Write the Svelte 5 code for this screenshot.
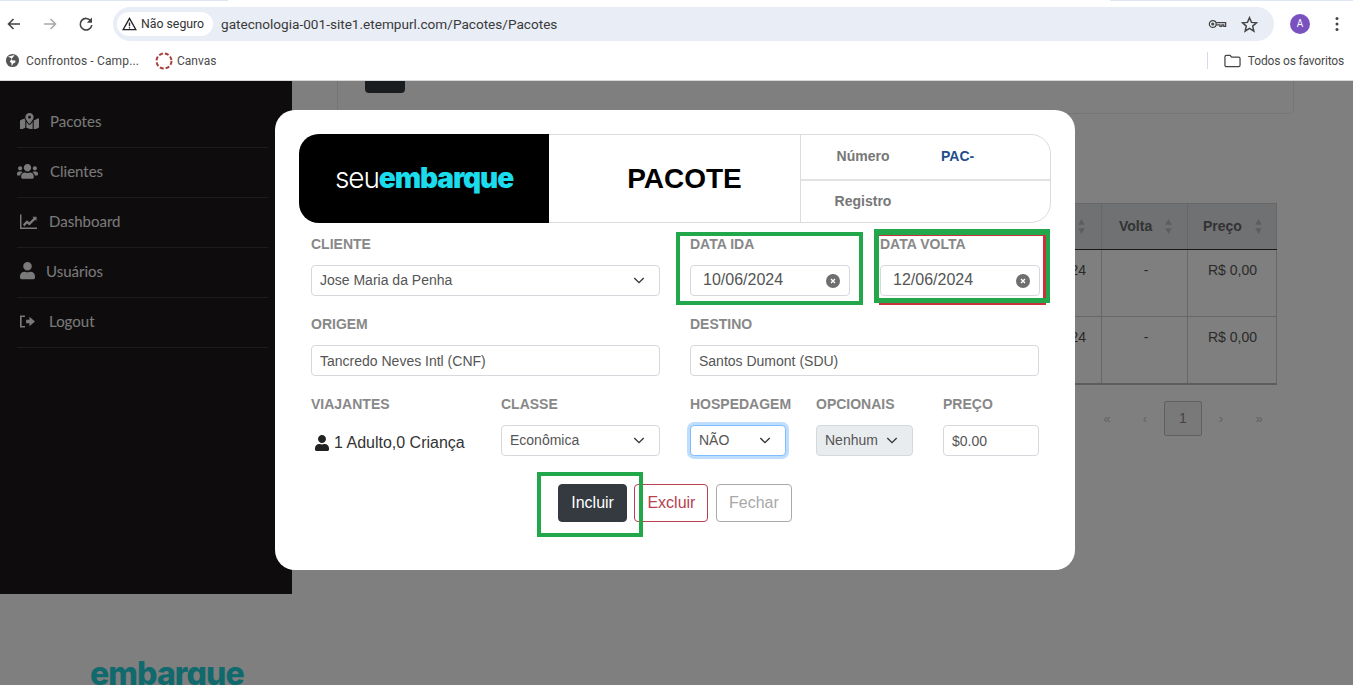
<script>
  const menu = [
    { name: "Pacotes", box: "0 0 576 512", w: 19, left: 20, gap: 11, d: "M288 0c-69.59 0-126 56.41-126 126 0 56.26 82.35 158.8 113.9 196.02 6.39 7.54 17.82 7.54 24.2 0C331.65 284.8 414 182.26 414 126 414 56.41 357.59 0 288 0zm0 168c-23.2 0-42-18.8-42-42s18.8-42 42-42 42 18.8 42 42-18.8 42-42 42zM20.12 215.95A32.006 32.006 0 0 0 0 245.66v250.32c0 11.32 11.43 19.06 21.94 14.86L160 448V214.92c-8.84-15.98-16.07-31.54-21.25-46.42L20.12 215.95zM288 359.67c-14.07 0-27.38-6.18-36.53-16.96-19.7-23.24-40.65-49.71-59.47-76.72v182l192 64V266c-18.82 27-39.76 53.48-59.47 76.72-9.15 10.77-22.46 16.95-36.53 16.95zm266.06-198.51L416 224v288l139.88-55.95A31.996 31.996 0 0 0 576 426.34V176.02c0-11.32-11.43-19.06-21.94-14.86z" },
    { name: "Clientes", box: "0 0 640 512", w: 21, left: 17, gap: 12, d: "M96 224c35.3 0 64-28.7 64-64s-28.7-64-64-64-64 28.7-64 64 28.7 64 64 64zm448 0c35.3 0 64-28.7 64-64s-28.7-64-64-64-64 28.7-64 64 28.7 64 64 64zm32 32h-64c-17.6 0-33.5 7.1-45.1 18.6 40.3 22.1 68.9 62 75.1 109.4h66c17.7 0 32-14.3 32-32v-32c0-35.3-28.7-64-64-64zm-256 0c61.9 0 112-50.1 112-112S381.9 32 320 32 208 82.1 208 144s50.1 112 112 112zm76.8 32h-8.3c-20.8 10-43.9 16-68.5 16s-47.6-6-68.5-16h-8.3C179.6 288 128 339.6 128 403.2V432c0 26.5 21.5 48 48 48h288c26.5 0 48-21.5 48-48v-28.8c0-63.6-51.6-115.2-115.2-115.2zm-223.7-13.4C161.5 263.1 145.6 256 128 256H64c-35.3 0-64 28.7-64 64v32c0 17.7 14.3 32 32 32h65.9c6.3-47.4 34.9-87.3 75.2-109.4z" },
    { name: "Dashboard", box: "0 0 512 512", w: 17, left: 20, gap: 12, d: "M0 48h44v388h468v44H0zM92 340l118-122 70 60 130-128-36-36h124v124l-38-38-178 174-70-60-88 90z" },
    { name: "Usuários", box: "0 0 448 512", w: 15, left: 20, gap: 11, d: "M224 256c70.7 0 128-57.3 128-128S294.7 0 224 0 96 57.3 96 128s57.3 128 128 128zm89.6 32h-16.7c-22.2 10.2-46.9 16-72.9 16s-50.6-5.8-72.9-16h-16.7C60.2 288 0 348.2 0 422.4V464c0 26.5 21.5 48 48 48h352c26.5 0 48-21.5 48-48v-41.6c0-74.2-60.2-134.4-134.4-134.4z" },
    { name: "Logout", box: "0 0 512 512", w: 15, left: 20, gap: 14, d: "M0 48h170v56H56v304h114v56H0zM210 196h112V90l190 166-190 166V316H210z" },
  ];
  const pages = ["«", "‹", "1", "›", "»"];
</script>

{#snippet chevron()}
  <svg class="chev" viewBox="0 0 14 8"><path d="M1.5 1.2 7 6.5l5.5-5.3" /></svg>
{/snippet}

{#snippet clear()}
  <svg class="clear" viewBox="0 0 14 14"><circle cx="7" cy="7" r="7" /><path d="M5 5l4 4M9 5l-4 4" /></svg>
{/snippet}

{#snippet sort()}
  <svg class="sort" viewBox="0 0 10 18"><path d="M5 0l4 7H1zM5 18l-4-7h8z" /></svg>
{/snippet}

<div class="screen">
  <header class="chrome">
    <div class="strip"></div>
    <div class="toolbar">
      <svg class="nav" viewBox="0 0 16 16"><path d="M14 8H3M7.5 3 2.5 8l5 5" /></svg>
      <svg class="nav off" viewBox="0 0 16 16"><path d="M2 8h11M8.5 3l5 5-5 5" /></svg>
      <svg class="nav" viewBox="0 0 16 16"><path d="M13 5.2A5.8 5.8 0 1 0 13.8 9" /><path class="solid" d="M14 1.5v5.2H8.8z" /></svg>
      <div class="omnibox">
        <div class="chip">
          <svg viewBox="0 0 16 15"><path d="M8 1.5 1.2 13.5h13.6zM8 6v4M8 11v1.2" /></svg>
          <span>Não seguro</span>
        </div>
        <span class="url">gatecnologia-001-site1.etempurl.com/Pacotes/Pacotes</span>
        <svg class="key" viewBox="0 0 20 12"><circle cx="5" cy="6" r="3.6" /><circle cx="5" cy="6" r="1" /><path d="M8.6 4.6h10v4h-2V7h-2v1.600h-2V7H8.600" /></svg>
        <svg class="star" viewBox="0 0 16 16"><path d="M8 1.600l1.900 4.400 4.700.4-3.600 3.100 1.100 4.700L8 11.700l-4.100 2.500 1.100-4.700-3.600-3.100 4.700-.4z" /></svg>
      </div>
      <div class="avatar">A</div>
      <svg class="dots" viewBox="0 0 4 16"><circle cx="2" cy="2.500" r="1.500" /><circle cx="2" cy="8" r="1.500" /><circle cx="2" cy="13.500" r="1.500" /></svg>
    </div>
    <div class="bookmarks">
      <svg class="globe" viewBox="0 0 16 16"><circle cx="8" cy="8" r="7" /><path d="M3 4l3 1 1 2-2 2 2 2v3l2-3 2-1v-2H8L7 6l2-2 1-2z" /></svg>
      <span class="mark-name first">Confrontos - Camp...</span>
      <svg class="canvas-ico" viewBox="0 0 18 18"><circle cx="9" cy="9" r="7.500" /></svg>
      <span class="mark-name">Canvas</span>
      <span class="sep"></span>
      <svg class="folder" viewBox="0 0 18 14"><path d="M1 2.500A1.500 1.500 0 0 1 2.500 1h4l1.500 2h7.500A1.500 1.500 0 0 1 17 4.500v7a1.500 1.500 0 0 1-1.500 1.500h-13A1.500 1.500 0 0 1 1 11.500z" /></svg>
      <span class="mark-name all">Todos os favoritos</span>
    </div>
  </header>

  <div class="page">
    <div class="left">
      <nav class="sidebar">
        {#each menu as item}
          <a class="item" href="#top">
            <svg viewBox={item.box} style:width="{item.w}px" style:margin-left="{item.left - 17}px" style:margin-right="{item.gap}px"><path d={item.d} /></svg>
            {item.name}
          </a>
        {/each}
      </nav>
      <div class="foot-logo">embarque</div>
    </div>

    <main class="content">
      <div class="filter-card"><span class="filter-btn"></span></div>
      <table>
        <thead>
          <tr>
            <th class="wide">Pacote</th>
            <th class="ida">Ida {@render sort()}</th>
            <th class="volta">Volta {@render sort()}</th>
            <th class="preco">Preço {@render sort()}</th>
          </tr>
        </thead>
        <tbody>
          <tr><td></td><td class="date">10/06/2024</td><td class="center">-</td><td class="price">R$ 0,00</td></tr>
          <tr><td></td><td class="date">10/06/2024</td><td class="center">-</td><td class="price">R$ 0,00</td></tr>
        </tbody>
      </table>
      <div class="pager">
        {#each pages as p}
          <span class:current={p === "1"}>{p}</span>
        {/each}
      </div>
    </main>

    <div class="backdrop">
      <section class="modal">
        <div class="head">
          <div class="brand"><span class="seu">seu</span><span class="emb">embarque</span></div>
          <div class="title">PACOTE</div>
          <div class="meta">
            <div class="meta-row"><b>Número</b><b class="code">PAC-</b></div>
            <div class="meta-row"><b>Registro</b></div>
          </div>
        </div>

        <div class="form">
          <div class="halves">
            <div>
              <div class="lbl">CLIENTE</div>
              <div class="ctl sel">Jose Maria da Penha {@render chevron()}</div>
            </div>
            <div class="dates">
              <div>
                <div class="lbl">DATA IDA</div>
                <div class="ctl date-ctl">10/06/2024 {@render clear()}</div>
              </div>
              <div>
                <div class="lbl">DATA VOLTA</div>
                <div class="ctl date-ctl">12/06/2024 {@render clear()}</div>
              </div>
            </div>
          </div>

          <div class="halves">
            <div>
              <div class="lbl">ORIGEM</div>
              <div class="ctl">Tancredo Neves Intl (CNF)</div>
            </div>
            <div>
              <div class="lbl">DESTINO</div>
              <div class="ctl">Santos Dumont (SDU)</div>
            </div>
          </div>

          <div class="halves">
            <div class="two">
              <div>
                <div class="lbl">VIAJANTES</div>
                <div class="travellers">
                  <svg viewBox="0 0 448 512"><path d="M224 256c70.7 0 128-57.300 128-128S294.700 0 224 0 96 57.300 96 128s57.300 128 128 128zm89.600 32h-16.700c-22.200 10.200-46.900 16-72.900 16s-50.600-5.800-72.900-16h-16.700C60.200 288 0 348.200 0 422.400V464c0 26.500 21.500 48 48 48h352c26.500 0 48-21.500 48-48v-41.600c0-74.200-60.200-134.400-134.400-134.400z" /></svg>
                  1 Adulto,0 Criança
                </div>
              </div>
              <div>
                <div class="lbl">CLASSE</div>
                <div class="ctl sel">Econômica {@render chevron()}</div>
              </div>
            </div>
            <div class="three">
              <div>
                <div class="lbl">HOSPEDAGEM</div>
                <div class="ctl sel focused">NÃO {@render chevron()}</div>
              </div>
              <div>
                <div class="lbl">OPCIONAIS</div>
                <div class="ctl sel disabled">Nenhum {@render chevron()}</div>
              </div>
              <div>
                <div class="lbl">PREÇO</div>
                <div class="ctl">$0.00</div>
              </div>
            </div>
          </div>
        </div>

        <div class="actions">
          <button class="btn dark">Incluir</button>
          <button class="btn danger">Excluir</button>
          <button class="btn muted">Fechar</button>
        </div>

        <!-- marcas desenhadas por cima do print -->
        <span class="redbox"></span>
        <span class="mark m-ida"></span>
        <span class="mark m-volta"></span>
        <span class="mark m-incluir"></span>
      </section>
    </div>
  </div>
</div>

<style>
  :global(body) {
    margin: 0;
    overflow: hidden;
  }

  .screen {
    height: 685px;
    display: flex;
    flex-direction: column;
    overflow: hidden;
    background: #fff;
    font-family: "Liberation Sans", Arial, sans-serif;
  }

  /* browser chrome */
  .chrome {
    flex: none;
    height: 81px;
    background: #fff;
    border-bottom: 1px solid #d8d8d8;
    box-sizing: border-box;
    font-family: Roboto, "Open Sans", sans-serif;
  }

  .strip {
    height: 1px;
    background: linear-gradient(to right, #dde6f2 228px, #fff 228px, #fff 1110px, #dde6f2 1110px);
  }

  .toolbar {
    height: 46px;
    display: flex;
    align-items: center;
    padding-left: 6px;
  }

  .nav {
    width: 16px;
    height: 16px;
    margin-right: 20px;
    fill: none;
    stroke: #444;
    stroke-width: 1.600;
  }

  .nav.off {
    stroke: #a8a8a8;
  }

  .nav .solid {
    fill: #444;
    stroke: none;
  }

  .omnibox {
    width: 1161px;
    height: 34px;
    margin-left: -1px;
    border-radius: 17px;
    background: #e9edf6;
    display: flex;
    align-items: center;
    padding: 0 16px 0 4px;
    box-sizing: border-box;
  }

  .chip {
    width: 96px;
    height: 24px;
    background: #fff;
    border-radius: 12px;
    display: flex;
    align-items: center;
    font-size: 12.300px;
    color: #333;
    white-space: nowrap;
  }

  .chip svg {
    width: 15px;
    height: 14px;
    margin: 0 4px 0 5px;
    fill: none;
    stroke: #222;
    stroke-width: 1.400;
  }

  .url {
    margin-left: 8px;
    font-size: 13.600px;
    color: #3a3a3a;
    flex: 1;
  }

  .key {
    width: 19px;
    height: 12px;
    fill: none;
    stroke: #444;
    stroke-width: 1.300;
    margin-right: 14px;
  }

  .star {
    width: 17px;
    height: 17px;
    fill: none;
    stroke: #444;
    stroke-width: 1.400;
  }

  .avatar {
    width: 20px;
    height: 20px;
    margin-left: 16px;
    border-radius: 50%;
    background: #7a52c0;
    color: #fff;
    font-size: 10px;
    line-height: 20px;
    text-align: center;
  }

  .dots {
    width: 4px;
    height: 16px;
    margin-left: 25px;
    fill: #444;
  }

  .bookmarks {
    height: 27px;
    display: flex;
    align-items: center;
    padding-left: 5px;
    font-size: 12px;
    color: #4a4a4a;
  }

  .globe {
    width: 15px;
    height: 15px;
    fill: #555;
  }

  .globe path {
    fill: #fff;
  }

  .mark-name {
    white-space: nowrap;
  }

  .mark-name.first {
    margin-left: 6px;
    width: 121px;
    letter-spacing: 0.15px;
  }

  .canvas-ico {
    width: 18px;
    height: 18px;
    margin-left: 8px;
    margin-right: 4px;
    fill: none;
    stroke: #a8403a;
    stroke-width: 2;
    stroke-dasharray: 4 2;
  }

  .sep {
    width: 1px;
    height: 17px;
    margin-left: auto;
    background: #d3dce9;
  }

  .folder {
    width: 17px;
    height: 14px;
    margin-left: 16px;
    fill: none;
    stroke: #444;
    stroke-width: 1.300;
  }

  .mark-name.all {
    margin: 0 9px 0 7px;
    letter-spacing: -0.17px;
  }

  /* page behind the modal */
  .page {
    position: relative;
    flex: 1;
    display: flex;
    overflow: hidden;
    background: #fff;
  }

  .left {
    flex: none;
    width: 292px;
  }

  .sidebar {
    height: 513px;
    box-sizing: border-box;
    background: #1c191a;
    padding: 17px 24px 0 17px;
    font-family: Lato, sans-serif;
  }

  .item {
    height: 50px;
    display: flex;
    align-items: center;
    box-sizing: border-box;
    border-bottom: 1px solid #3c3a3b;
    color: #f4f4f4;
    font-size: 15px;
    text-decoration: none;
    padding-bottom: 3px;
  }

  .item svg {
    flex: none;
    fill: #f4f4f4;
  }

  .foot-logo {
    margin: 60px 0 0 90px;
    font-family: Inter, sans-serif;
    font-weight: 800;
    font-size: 32px;
    line-height: 40px;
    letter-spacing: -0.9px;
    color: #1ed3da;
  }

  .content {
    flex: 1;
    padding: 0 59px 0 45px;
    font-size: 14px;
    color: #555;
  }

  .filter-card {
    height: 33px;
    box-sizing: border-box;
    border: 1px solid #eaeaea;
    border-top: 0;
    border-radius: 0 0 5px 5px;
    padding-left: 27px;
  }

  .filter-btn {
    display: block;
    width: 40px;
    height: 12px;
    background: #343a40;
    border-radius: 0 0 4px 4px;
  }

  table {
    margin: 89px 17px 0;
    width: 923px;
    border-collapse: collapse;
    table-layout: fixed;
    border: 1px solid #ccc;
    border-bottom: 2px solid #bbb;
  }

  th,
  td {
    border: 1px solid #cfcfcf;
    padding: 0 15px;
    box-sizing: border-box;
  }

  thead tr {
    height: 46px;
    background: #dfe3e7;
  }

  th {
    border-bottom: 1px solid #333;
    padding-bottom: 2px;
    font-weight: bold;
    color: #666;
    text-align: left;
    white-space: nowrap;
  }

  tbody tr {
    height: 67px;
  }

  td {
    vertical-align: top;
    padding-top: 12px;
  }

  .ida {
    width: 121px;
    text-align: right;
  }

  .volta {
    width: 86px;
    padding-left: 17px;
  }

  .preco {
    width: 89px;
  }

  .date {
    text-align: right;
  }

  .center {
    text-align: center;
    padding-left: 18px;
  }

  .price {
    text-align: right;
    padding-right: 19px;
  }

  .sort {
    width: 9px;
    height: 15px;
    margin-left: 8px;
    vertical-align: -3px;
    fill: #bbb;
  }

  .pager {
    margin: 16px 0 0 751px;
    display: flex;
    align-items: center;
    width: 200px;
    color: #c4c4c4;
    font-size: 13px;
  }

  .pager span {
    width: 38px;
    text-align: center;
    line-height: 35px;
  }

  .pager .current {
    box-sizing: border-box;
    height: 35px;
    line-height: 33px;
    border: 1px solid #c0c0c0;
    border-radius: 2px;
    background: #f2f2f2;
    color: #888;
    font-size: 14px;
  }

  /* modal */
  .backdrop {
    position: absolute;
    inset: 0;
    background: rgba(0, 0, 0, 0.5);
    padding: 29px 0 0 275px;
  }

  .modal {
    position: relative;
    width: 800px;
    height: 460px;
    box-sizing: border-box;
    padding: 24px;
    background: #fff;
    border-radius: 20px;
  }

  .head {
    height: 89px;
    display: grid;
    grid-template-columns: 249px 252px 1fr;
    box-sizing: border-box;
    border: 1px solid #dcdcdc;
    border-radius: 20px;
  }

  .brand {
    margin: -1px 0 -1px -1px;
    background: #000;
    border-radius: 20px 0 0 20px;
    display: flex;
    align-items: center;
    justify-content: center;
    font-family: Inter, sans-serif;
    font-size: 28px;
    letter-spacing: -1.100px;
    padding-bottom: 2px;
  }

  .seu {
    color: #fff;
    font-weight: 300;
  }

  .emb {
    color: #1bdcec;
    font-weight: 900;
  }

  .title {
    display: flex;
    align-items: center;
    justify-content: center;
    padding-left: 20px;
    font-weight: bold;
    font-size: 28px;
    color: #000;
    border-right: 1px solid #dcdcdc;
  }

  .meta {
    display: grid;
    grid-template-rows: 44px 1fr;
    font-size: 14px;
    color: #777;
  }

  .meta-row {
    display: flex;
    align-items: center;
    padding-bottom: 2px;
  }

  .meta-row + .meta-row {
    border-top: 2px solid #e2e2e2;
  }

  .meta-row b {
    width: 124px;
    text-align: center;
  }

  .meta-row .code {
    width: auto;
    margin-left: 16px;
    color: #1f4e8c;
  }

  .form {
    padding: 10px 12px 0;
    display: grid;
    row-gap: 17px;
  }

  .halves {
    display: grid;
    grid-template-columns: 349px 349px;
    column-gap: 30px;
  }

  .dates {
    display: grid;
    grid-template-columns: 160px 160px;
    column-gap: 30px;
  }

  .two {
    display: grid;
    grid-template-columns: 160px 159px;
    column-gap: 30px;
  }

  .three {
    display: grid;
    grid-template-columns: 96px 97px 96px;
    column-gap: 30px;
  }

  .lbl {
    height: 22px;
    margin-bottom: 10px;
    line-height: 22px;
    font-size: 14px;
    font-weight: bold;
    color: #888;
    white-space: nowrap;
  }

  .ctl {
    height: 31px;
    box-sizing: border-box;
    display: flex;
    align-items: center;
    justify-content: space-between;
    padding: 0 14px 0 8px;
    border: 1px solid #d5d8dc;
    border-radius: 4px;
    background: #fff;
    font-size: 14px;
    color: #555;
    white-space: nowrap;
  }

  .sel {
    padding-bottom: 2px;
  }

  .date-ctl {
    padding: 0 9px 2px 12px;
    font-size: 16px;
  }

  .focused {
    border-color: #80bdff;
    box-shadow: 0 0 0 3px rgba(0, 123, 255, 0.25);
  }

  .disabled {
    background: #e9ecef;
    border-color: #d5d8dc;
  }

  .chev {
    flex: none;
    width: 12px;
    height: 7px;
    margin-top: 2px;
    fill: none;
    stroke: #333;
    stroke-width: 1.600;
  }

  .clear {
    flex: none;
    width: 14px;
    height: 14px;
    margin-top: 3px;
  }

  .clear circle {
    fill: #6e6e6e;
  }

  .clear path {
    stroke: #fff;
    stroke-width: 1.400;
  }

  .travellers {
    height: 31px;
    display: flex;
    align-items: center;
    padding: 5px 0 0 4px;
    box-sizing: border-box;
    font-size: 16px;
    color: #333;
    white-space: nowrap;
  }

  .travellers svg {
    width: 14px;
    height: 16px;
    margin-right: 5px;
    fill: #222;
  }

  .actions {
    margin-top: 28px;
    display: flex;
    justify-content: center;
    gap: 7.500px;
  }

  .btn {
    height: 38px;
    padding: 0 12px;
    border: 1px solid;
    border-radius: 4px;
    background: #fff;
    font-family: inherit;
    font-size: 16px;
  }

  .dark {
    background: #343a40;
    border-color: #343a40;
    color: #fff;
  }

  .danger {
    border-color: #b8404f;
    color: #b8404f;
  }

  .muted {
    border-color: #aaa;
    color: #a8a8a8;
  }

  .mark {
    position: absolute;
    box-sizing: border-box;
    border: 4px solid #22a84b;
  }

  .m-ida {
    left: 401px;
    top: 122px;
    width: 187px;
    height: 73px;
  }

  .m-volta {
    left: 599px;
    top: 119px;
    width: 176px;
    height: 74px;
    border-width: 6px 4px 5px 5px;
  }

  .m-incluir {
    left: 262px;
    top: 362px;
    width: 106px;
    height: 65px;
  }

  .redbox {
    position: absolute;
    left: 604px;
    top: 125px;
    width: 167px;
    height: 70px;
    box-sizing: border-box;
    border: 2px solid #c8323a;
    border-right-width: 3px;
    border-left: 0;
    border-top-width: 1px;
  }
</style>
